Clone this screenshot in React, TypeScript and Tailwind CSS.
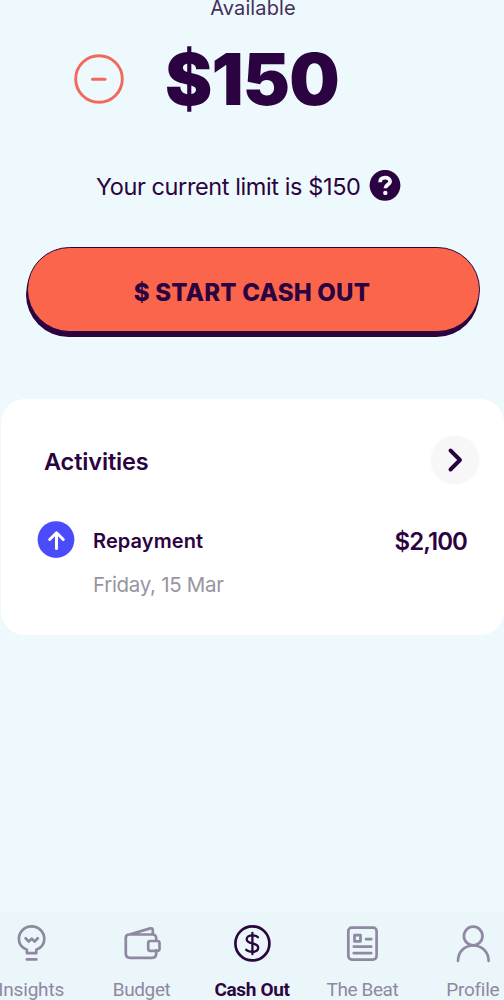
import type { ReactNode } from "react";

function NavItem({ label, active, children }: { label: ReactNode; active?: boolean; children: ReactNode }) {
  return (
    <a className={active ? "flex flex-col items-center text-[#2b0740]" : "flex flex-col items-center text-[#8e88a0]"}>
      <svg viewBox="0 0 40 40" className="h-10 w-10" fill="none" stroke="currentColor" strokeWidth="2.7" strokeLinecap="round" strokeLinejoin="round">
        {children}
      </svg>
      <span className="mt-[14px] h-6 whitespace-nowrap leading-6">{label}</span>
    </a>
  );
}

export default function App() {
  return (
    <div className="flex h-[1000px] w-[504px] flex-col overflow-hidden bg-[#edf9fc] font-['Inter','Liberation_Sans',sans-serif] text-[#2b0340]">
      <header className="flex h-5 shrink-0 justify-center">
        <span className="-mt-1 ml-[2px] h-6 text-[20px] leading-6 tracking-[0.1px] text-[#453058]">Available</span>
      </header>

      <section className="flex h-[118px] shrink-0 items-center pl-[74px]">
        <svg viewBox="0 0 50 50" className="h-[50px] w-[50px]" fill="none" stroke="#f2695b" strokeLinecap="round">
          <circle cx="25" cy="25" r="23.3" strokeWidth="2.9" />
          <path d="M18.5 25.2H31" strokeWidth="3" />
        </svg>
        <span className="ml-[41px] text-[71px] font-black leading-[118px] tracking-[-0.8px]">$150</span>
      </section>

      <section className="mt-[32px] flex h-8 shrink-0 items-center pl-[96px]">
        <span className="mt-[2px] whitespace-nowrap text-[23.5px] leading-8 tracking-[-0.4px]">Your current limit is $150</span>
        <svg viewBox="0 0 32 32" className="ml-auto mr-[103px] h-8 w-8" fill="none">
          <circle cx="16" cy="15.3" r="15.4" fill="#2b0340" />
          <path d="M11 12.2C11 9.1 13 7.6 16.1 7.6c2.9 0 5 1.5 5 4 0 3.2-4.7 3-4.7 6.6" stroke="#f4fbfd" strokeWidth="3.8" />
          <circle cx="16.3" cy="22.9" r="2.2" fill="#f4fbfd" />
        </svg>
      </section>

      <button className="ml-[27px] mt-[45px] h-[85px] w-[453px] shrink-0 rounded-full border-[1.5px] border-[#2b0340] bg-[#fb654c] pt-[6px] text-[24px] font-extrabold leading-[24px] tracking-[0.2px] shadow-[-1px_5px_0_0_#2b0340]">
        <span className="-ml-[3px]">$ START CASH OUT</span>
      </button>

      <section className="ml-px mt-[67px] flex h-[236px] shrink-0 flex-col rounded-[24px] bg-white">
        <div className="mt-9 flex h-[50px] items-center justify-between pl-[43px] pr-6">
          <h2 className="mt-[3px] text-[23.5px] font-semibold tracking-[-0.15px]">Activities</h2>
          <svg viewBox="0 0 50 50" className="h-[50px] w-[50px]" fill="none">
            <circle cx="25" cy="25" r="24.5" fill="#f7f7f8" />
            <path d="M20.5 15.5L30 25L20.5 34.5" stroke="#2b0340" strokeWidth="3.9" strokeLinecap="round" strokeLinejoin="round" />
          </svg>
        </div>
        <div className="mt-9 flex h-[38px] items-center pl-9 pr-[37px]">
          <svg viewBox="0 0 38 38" className="h-[38px] w-[38px]" fill="none">
            <circle cx="19" cy="18.6" r="18.4" fill="#4a4cfb" />
            <path d="M19.5 27.5V12M12.7 18.5L19.5 11.8L26.3 18.5" stroke="white" strokeWidth="3" strokeLinecap="round" strokeLinejoin="round" />
          </svg>
          <span className="ml-[18px] mt-[2px] text-[20px] font-semibold tracking-[0.1px]">Repayment</span>
          <span className="ml-auto mt-[3px] text-[24px] font-semibold tracking-[-0.9px]">$2,100</span>
        </div>
        <span className="ml-[92px] mt-[14px] h-6 text-[20.5px] leading-6 tracking-[-0.3px] text-[#9894a2]">Friday, 15 Mar</span>
      </section>

      <nav className="-ml-6 mt-auto grid h-[88px] w-[552px] shrink-0 grid-cols-5 bg-[#ebf6fa] pt-[12px] font-['Roboto',sans-serif] text-[19px]">
        <NavItem label={<span className="tracking-[-0.2px]">Insights</span>}>
          <path d="M15.9 29.2V25.7C11.1 23.8 7.9 19.7 7.9 15a12.7 12.7 0 0 1 25.4 0c0 4.7-3.2 8.8-8 10.7v3.5zM15.9 35.4H25.4M14.6 14.2l3.2 3.4 2.9-3 2.9 3 3.2-3.4" />
        </NavItem>
        <NavItem label={<span className="tracking-[-0.4px]">Budget</span>}>
          <path d="M3.8 13.3v16.2c0 2.8 1.6 4.3 4.3 4.3h22c2.7 0 4.1-1.5 4.1-4.2v-3.2M34.2 16v-1.7c0-2.6-1.5-3.8-4-3.8H7.3c-2.1 0-3.5 1-3.5 3.2M9 10L28.3 4.4c1.8-.5 2.5.3 2.5 1.9V10" />
          <rect x="26.2" y="17" width="11.3" height="9.8" rx="2" />
        </NavItem>
        <NavItem active label={<span className="font-bold tracking-[-0.35px]">Cash Out</span>}>
          <circle cx="20.4" cy="19.4" r="17" />
          <path d="M20.4 8.8V30.2M25.9 13.3c-1-1.2-2.9-2-5.5-2-3.6 0-5.7 1.6-5.7 3.9 0 2.7 2.7 3.5 5.7 4.1 3.1.7 5.8 1.5 5.8 4.3 0 2.6-2.3 4.2-5.8 4.2-2.9 0-5-.7-6.2-2" strokeWidth="2.3" />
        </NavItem>
        <NavItem label={<span className="tracking-[-0.4px]">The Beat</span>}>
          <rect x="6.3" y="3.6" width="28.3" height="32" rx="3.5" />
          <path d="M12.5 11.1h6v6.3h-6zM24 15.1h5.3M11.8 22.6h17.4M11.8 29.2h17.4" />
        </NavItem>
        <NavItem label={<span className="tracking-[-0.3px]">Profile</span>}>
          <circle cx="20.2" cy="12" r="9.3" />
          <path d="M5 36.8c0-9 6.6-15.3 15.2-15.3S35.6 27.8 35.6 36.8" />
        </NavItem>
      </nav>
    </div>
  );
}
